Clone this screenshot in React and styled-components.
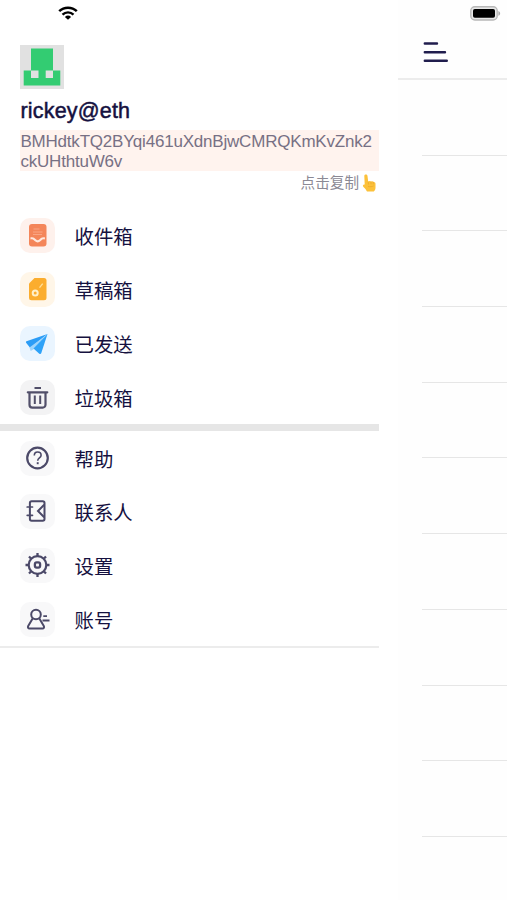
import React from "react";
import styled, { createGlobalStyle } from "styled-components";

const ADDRESS = ["BMHdtkTQ2BYqi461uXdnBjwCMRQKmKvZnk2", "ckUHthtuW6v"];

const InboxIcon = () => (
  <svg width="35" height="35" viewBox="0 0 35 35" fill="none">
    <rect x="9" y="6" width="17.5" height="22.5" rx="3" fill="#f4865a" />
    <path d="M13.5 11h6M13 14h9.500M13 16.500h9" stroke="#f9a684" strokeWidth="1" />
    <path d="M10.500 20.300c1 0 2.300-.4 3.200.5l1.700 1.500c1.300 1.200 3.300 1.200 4.600 0l1.600-1.500c.9-.8 2.200-.5 3.300-.5" stroke="#ffe9df" strokeWidth="2.200" />
  </svg>
);

const DraftIcon = () => (
  <svg width="35" height="35" viewBox="0 0 35 35" fill="none">
    <path d="M14.500 6H24a2.500 2.500 0 0 1 2.500 2.500v17.200a2.500 2.500 0 0 1-2.500 2.500H11.500A2.500 2.500 0 0 1 9 25.700V11.500z" fill="#fbad2e" />
    <circle cx="15.200" cy="21" r="2.500" stroke="#fff0c8" strokeWidth="2" />
    <path d="M19.500 15.700l3.200-4" stroke="#ffe09b" strokeWidth="1.300" />
  </svg>
);

const SentIcon = () => (
  <svg width="35" height="35" viewBox="0 0 35 35" fill="none">
    <path d="M27.500 8L6.500 15.200c-.7.300-.7 1.200-.2 1.800l4 5z" fill="#2b9cf6" />
    <path d="M27 8.500L9.500 21.500l1.200 3.500 3.300-2z" fill="#9dd4fc" />
    <path d="M27.500 8L13.500 22.500l5.800 5.200c.8.600 1.700.3 2-.6z" fill="#2ea2f8" />
  </svg>
);

const TrashIcon = () => (
  <svg width="35" height="35" viewBox="0 0 35 35" fill="none" stroke="#514f69" strokeWidth="2.200">
    <path d="M14.500 8h6.500" strokeWidth="2" />
    <path d="M7.800 12.300h19.500" strokeLinecap="round" />
    <path d="M9.500 12.500v12.300a2.800 2.800 0 0 0 2.800 2.800h10.400a2.800 2.800 0 0 0 2.800-2.800V12.500" />
    <path d="M14.800 15.500v8.500M20.200 15.500v8.500" strokeWidth="2" />
  </svg>
);

const HelpIcon = () => (
  <svg width="35" height="35" viewBox="0 0 35 35" fill="none" stroke="#4b4968">
    <circle cx="17.500" cy="17" r="10.300" strokeWidth="2.200" />
    <path d="M14.300 14.500c0-2.200 1.400-3.500 3.300-3.500s3.500 1.200 3.500 3.200c0 2.700-3.400 2.700-3.400 5.500" strokeWidth="1.600" />
    <path d="M17.700 21.200v2" strokeWidth="1.900" />
  </svg>
);

const ContactIcon = () => (
  <svg width="35" height="35" viewBox="0 0 35 35" fill="none" stroke="#4b4968" strokeWidth="2">
    <rect x="9.900" y="7.200" width="14.600" height="19.600" rx="1.800" />
    <path d="M24.200 10.700L18 17l6.200 6.300" />
    <path d="M7.200 13h5.300M7.200 21.300h5.300" strokeLinecap="round" strokeWidth="1.700" />
  </svg>
);

const SettingIcon = () => (
  <svg width="35" height="35" viewBox="0 0 35 35" fill="none" stroke="#4b4968">
    <circle cx="17.500" cy="17" r="8.800" strokeWidth="2.200" />
    <rect x="14.900" y="14.400" width="5.200" height="5.200" rx="1.800" strokeWidth="2.300" />
    <path
      d="M17.500 5v3M17.500 26v3M5.500 17h3M26.500 17h3M9 8.500l2 2M24 23.500l2 2M9 25.500l2-2M24 10.500l2-2"
      strokeWidth="2.300"
    />
  </svg>
);

const AccountIcon = () => (
  <svg width="35" height="35" viewBox="0 0 35 35" fill="none" stroke="#4b4968" strokeWidth="2">
    <circle cx="16" cy="12.500" r="4.800" />
    <path d="M12.800 16.300L8.200 24c-.7 1.300 0 2.500 1.300 2.500h13c1.300 0 2-1.200 1.300-2.500l-4.600-7.700" strokeLinejoin="round" />
    <path d="M23.300 14.200h3.700M22.500 18.500h7" strokeWidth="1.800" />
  </svg>
);

const PointUp = () => (
  <svg width="14" height="18" viewBox="0 0 14 18">
    <path
      d="M2.300 1.800c.2-1.600 2.900-1.600 3.200.1l.7 5.600 1.300-.5 1.500.5 1.400-.3 1.300.7c1-.1 1.800.6 1.800 1.800v4c0 1.800-.8 2.900-1.700 3.800H5c-.8-1.500-1.700-2.900-3.300-4.300C.4 12 .6 10.400 2.700 10.500z"
      fill="#fcc13a"
    />
    <path d="M6.200 7.700l.3 2.800M8.900 7.500l.2 2.800M11.300 7.800v2.500M6 12.300c2 .7 4 .5 5.700-.4" stroke="#e8a52d" strokeWidth=".7" fill="none" />
  </svg>
);

const mailMenu = [
  { name: "收件箱", bg: "#fef1ec", icon: <InboxIcon /> },
  { name: "草稿箱", bg: "#fff6e8", icon: <DraftIcon /> },
  { name: "已发送", bg: "#eaf5ff", icon: <SentIcon /> },
  { name: "垃圾箱", bg: "#f3f3f4", icon: <TrashIcon /> },
];

const userMenu = [
  { name: "帮助", bg: "#f8f8f9", icon: <HelpIcon /> },
  { name: "联系人", bg: "#f8f8f9", icon: <ContactIcon /> },
  { name: "设置", bg: "#f8f8f9", icon: <SettingIcon /> },
  { name: "账号", bg: "#f8f8f9", icon: <AccountIcon /> },
];

function Menu({ list }) {
  return list.map((item) => (
    <MenuItem key={item.name}>
      <IconTile $bg={item.bg}>{item.icon}</IconTile>
      <MenuName>{item.name}</MenuName>
    </MenuItem>
  ));
}

function App() {
  return (
    <Screen>
      <GlobalStyle />
      <Drawer>
        <StatusLeft>
          <svg width="20" height="14" viewBox="0 0 20 14" fill="none" stroke="#000">
            <path d="M1.200 5.200a12.700 12.700 0 0 1 17.600 0" strokeWidth="2.500" />
            <path d="M4.500 8.600a8 8 0 0 1 11 0" strokeWidth="2.400" />
            <path d="M10 13.800L6.900 10.900a4.500 4.500 0 0 1 6.200 0z" fill="#000" stroke="none" />
          </svg>
        </StatusLeft>
        <Profile>
          <svg width="44" height="44" viewBox="0 0 44 44">
            <path d="M0 0h44v44H0z" fill="#e1e1e1" />
            <path d="M11 3.500h22v22h7.300v15H3.700v-15H11z" fill="#33cc72" />
            <path d="M11 25.500h7.500v7.500H11zM25.700 25.500H33v7.500h-7.300z" fill="#e1e1e1" />
          </svg>
          <UserName>rickey@eth</UserName>
          <Address>
            {ADDRESS[0]}
            <br />
            {ADDRESS[1]}
          </Address>
          <CopyTip>
            点击复制
            <PointUp />
          </CopyTip>
        </Profile>
        <MenuGroup>
          <Menu list={mailMenu} />
        </MenuGroup>
        <Separator />
        <MenuGroup $last>
          <Menu list={userMenu} />
        </MenuGroup>
      </Drawer>
      <Main>
        <StatusRight>
          <svg width="31" height="15" viewBox="0 0 31 15">
            <rect x=".8" y=".8" width="26.400" height="13.200" rx="4" fill="#e8e8e8" stroke="#b8b8b8" strokeWidth="1.400" />
            <rect x="3" y="3" width="22" height="8.800" rx="1.800" fill="#000" />
            <path d="M28.400 5c2.300.8 2.300 4 0 4.800z" fill="#aaa" />
          </svg>
        </StatusRight>
        <Header>
          <svg width="25" height="21" viewBox="0 0 25 21" stroke="#201d4d" strokeWidth="2.400" strokeLinecap="round">
            <path d="M1.800 1.500h12.200M1.800 10.200h20.200M1.800 18.700h22" />
          </svg>
        </Header>
        <MailList>
          {Array.from({ length: 10 }, (_, i) => (
            <MailRow key={i} />
          ))}
        </MailList>
      </Main>
    </Screen>
  );
}

const GlobalStyle = createGlobalStyle`
  body {
    margin: 0;
    background: #fefefe;
  }
  * {
    box-sizing: border-box;
  }
  svg {
    display: block;
    flex-shrink: 0;
  }
`;

const Screen = styled.div`
  display: flex;
  width: 507px;
  height: 900px;
  overflow: hidden;
  background: #fefefe;
  color: #15113f;
  font-family: "Liberation Sans", "Noto Sans CJK SC", sans-serif;
`;

const Drawer = styled.div`
  width: 398px;
  padding-right: 19px;
  background: #fff;
`;

const StatusLeft = styled.div`
  height: 45px;
  padding: 6px 0 0 58.4px;
`;

const Profile = styled.div`
  padding-left: 20.4px;
`;

const UserName = styled.div`
  height: 41px;
  padding-top: 8px;
  font-size: 21.5px;
  line-height: 28px;
  letter-spacing: 0.2px;
  -webkit-text-stroke: 0.5px #15113f;
`;

const Address = styled.div`
  height: 41px;
  padding-top: 2px;
  background: #fff3ee;
  color: #777084;
  font-size: 17px;
  line-height: 20px;
  letter-spacing: -0.2px;
  white-space: nowrap;
`;

const CopyTip = styled.div`
  display: flex;
  justify-content: flex-end;
  align-items: center;
  height: 24px;
  padding-right: 3px;
  gap: 3px;
  color: #8b8994;
  font-size: 14.6px;
  line-height: 24px;
`;

const MenuGroup = styled.div`
  padding: ${({ $last }) => ($last ? "0" : "14px 0 0")};
  border-bottom: ${({ $last }) => ($last ? "2px solid #ececec" : "0")};
`;

const MenuItem = styled.div`
  display: flex;
  align-items: center;
  height: 53.8px;
  padding-left: 20px;
`;

const IconTile = styled.div`
  width: 35px;
  height: 35px;
  border-radius: 10px;
  background: ${({ $bg }) => $bg};
`;

const MenuName = styled.div`
  margin-left: 19.5px;
  padding-top: 3px;
  font-size: 19.4px;
  line-height: 28px;
`;

const Separator = styled.div`
  height: 7px;
  background: #e6e6e6;
`;

const Main = styled.div`
  flex: 1;
  background: #fefefe;
`;

const StatusRight = styled.div`
  height: 26px;
  padding: 6px 0 0 72px;
`;

const Header = styled.div`
  display: flex;
  align-items: center;
  height: 54px;
  padding-left: 25px;
  border-bottom: 2px solid #ececec;
`;

const MailList = styled.div`
  padding-left: 24px;
`;

const MailRow = styled.div`
  height: 75.7px;
  border-bottom: 1px solid #e6e6e6;
`;

export default App;
